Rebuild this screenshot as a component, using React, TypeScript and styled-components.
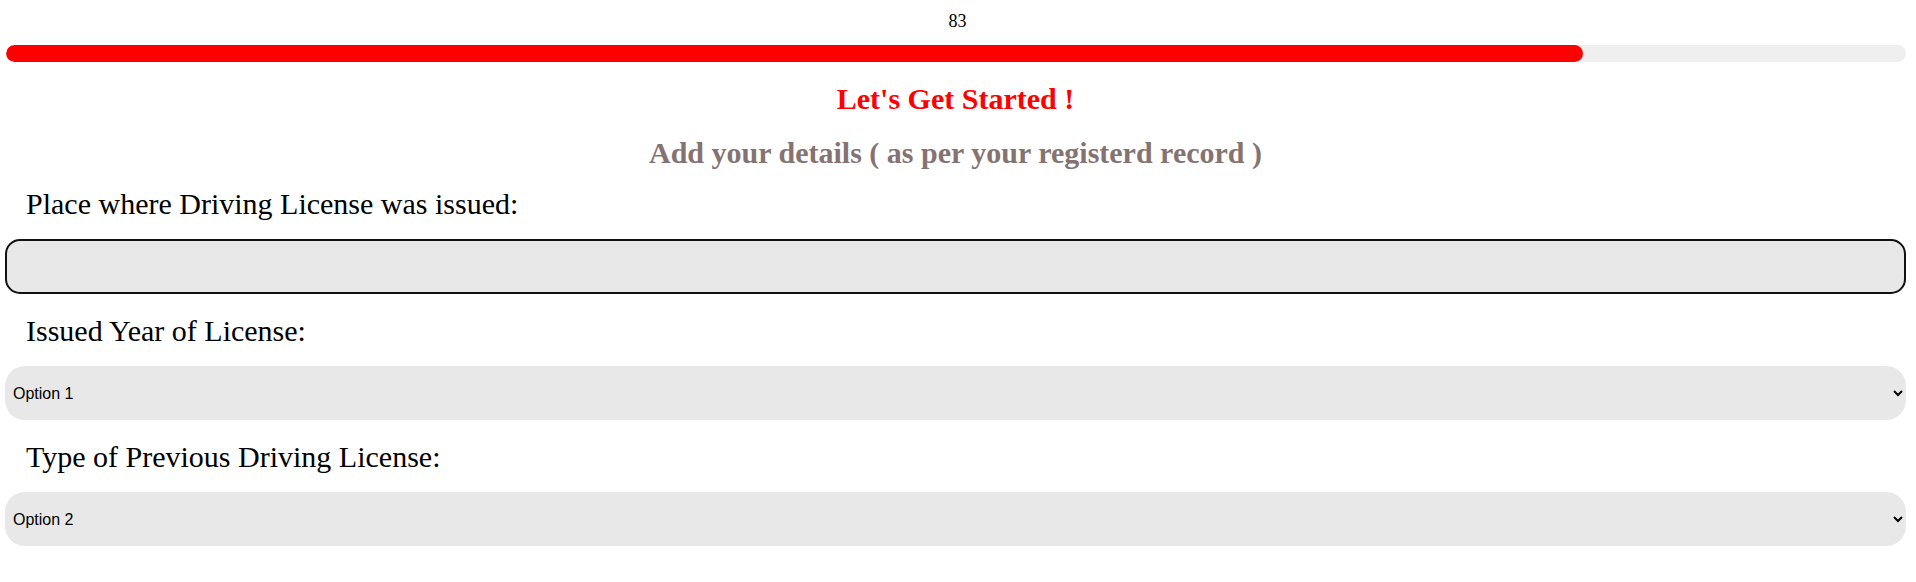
import React from 'react';
import styled, { createGlobalStyle } from 'styled-components';

const GlobalStyle = createGlobalStyle`
  body {
    margin: 0;
    background: #ffffff;
    font-family: "Liberation Serif", "Times New Roman", serif;
    color: #000;
  }
`;

const Page = styled.div`
  padding: 11px 10px 0 5px;
`;

const Count = styled.div`
  text-align: center;
  font-size: 18px;
  padding-left: 4px;
`;

const Track = styled.div`
  margin: 13px 0 0 1px;
  height: 17px;
  background: #efefef;
  border-radius: 9px;
  overflow: hidden;
`;

const Fill = styled.div`
  height: 100%;
  background: #ff0000;
  border-radius: 9px;
`;

const Title = styled.h1`
  margin: 20px 0 0;
  text-align: center;
  font-size: 30px;
  font-weight: bold;
  color: #ff0000;
`;

const SubTitle = styled.h2`
  margin: 20px 0 0;
  text-align: center;
  font-size: 30px;
  font-weight: bold;
  color: #857372;
`;

const Field = styled.div<{ $first?: boolean }>`
  margin-top: ${(p) => (p.$first ? '17px' : '20px')};
`;

const Label = styled.label`
  display: block;
  padding-left: 21px;
  margin-bottom: 18px;
  font-size: 30px;
`;

const TextInput = styled.input`
  display: block;
  box-sizing: border-box;
  width: 100%;
  height: 55px;
  border: 2px solid #111111;
  border-radius: 15px;
  background: #e8e8e8;
  padding: 0 2px;
  font-family: "Liberation Sans", Arial, sans-serif;
  font-size: 16px;
  outline: none;
`;

const Select = styled.select`
  display: block;
  box-sizing: border-box;
  width: 100%;
  height: 54px;
  border: none;
  border-radius: 20px;
  background-color: #e8e8e8;
  padding: 0 4px;
  font-family: "Liberation Sans", Arial, sans-serif;
  font-size: 16px;
  color: #000;
`;

const progress = 83;

export default function App() {
  return (
    <Page>
      <GlobalStyle />
      <Count>{progress}</Count>
      <Track>
        <Fill style={{ width: `${progress}%` }} />
      </Track>
      <Title>Let's Get Started !</Title>
      <SubTitle>Add your details ( as per your registerd record )</SubTitle>
      <Field $first>
        <Label htmlFor="place">Place where Driving License was issued:</Label>
        <TextInput id="place" type="text" autoFocus />
      </Field>
      <Field>
        <Label htmlFor="year">Issued Year of License:</Label>
        <Select id="year" defaultValue="Option 1">
          <option>Option 1</option>
          <option>Option 2</option>
          <option>Option 3</option>
        </Select>
      </Field>
      <Field>
        <Label htmlFor="type">Type of Previous Driving License:</Label>
        <Select id="type" defaultValue="Option 2">
          <option>Option 1</option>
          <option>Option 2</option>
          <option>Option 3</option>
        </Select>
      </Field>
    </Page>
  );
}
